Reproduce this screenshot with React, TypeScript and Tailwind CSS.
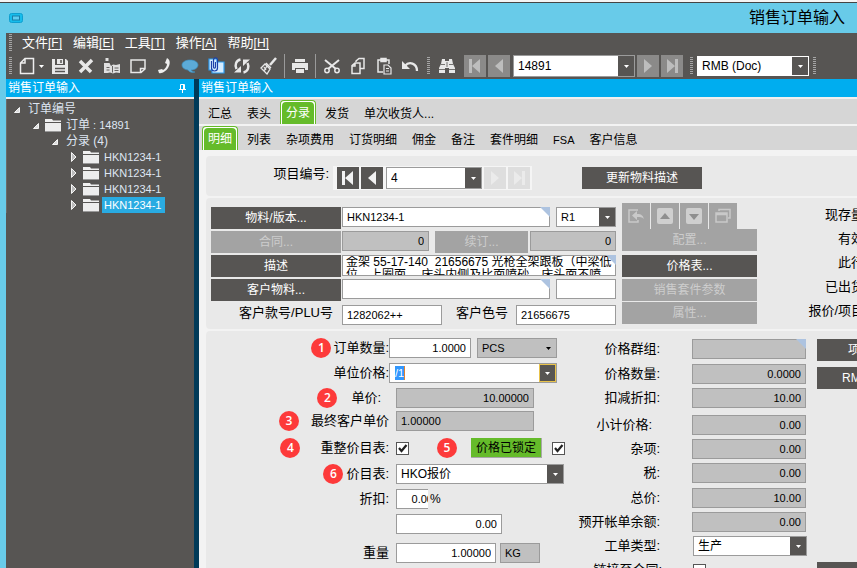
import React from "react";
import type { ReactNode } from "react";

const noop = () => {};

function Grip() {
  return (
    <svg className="h-[18px] w-[3px] shrink-0" viewBox="0 0 3 18" aria-hidden="true">
      {[0, 2, 4, 6, 8, 10, 12, 14, 16].map((y) => (
        <rect key={y} x="0" y={y} width="3" height="1" fill="#a5a5a5" />
      ))}
    </svg>
  );
}

function Menu({ text, hotkey }: { text: string; hotkey: string }) {
  return (
    <button type="button" className="flex items-center text-[13px] leading-5 text-white">
      {text}
      <span className="text-xs leading-4 underline underline-offset-2">[{hotkey}]</span>
    </button>
  );
}

function Tool({ label, children }: { label: string; children: ReactNode }) {
  return (
    <button type="button" aria-label={label} className="flex h-6 w-[26px] shrink-0 items-center justify-center">
      <svg className="size-[18px]" viewBox="0 0 18 18" fill="none" stroke="#e8e8e8" strokeWidth="1.5">
        {children}
      </svg>
    </button>
  );
}

type NavKind = "first" | "prev" | "next" | "last";

const navPaths: Record<NavKind, string> = {
  first: "M5 4h3v14H5zM16 4v14l-8-7z",
  prev: "M15 4v14l-8-7z",
  next: "M7 4v14l8-7z",
  last: "M14 4h3v14h-3zM6 4v14l8-7z",
};

function Nav({ kind, label, tone }: { kind: NavKind; label: string; tone: "dark" | "grey" | "pale" }) {
  const bg = { dark: "bg-[#575553]", grey: "bg-[#8b8a89]", pale: "bg-[#dedede]" }[tone];
  const fill = { dark: "#f2f2f2", grey: "#bdbdbd", pale: "#ebebeb" }[tone];
  return (
    <button type="button" aria-label={label} className={`size-[22px] shrink-0 ${bg}`}>
      <svg className="size-[22px]" viewBox="0 0 22 22" aria-hidden="true">
        <path d={navPaths[kind]} fill={fill} />
      </svg>
    </button>
  );
}

function Caret({ color }: { color: string }) {
  return (
    <svg className="h-[3px] w-[5px]" viewBox="0 0 5 3" aria-hidden="true">
      <path d="M0 0h5L2.500 3z" fill={color} />
    </svg>
  );
}

function Select({
  label,
  id,
  value,
  className,
  arrow = "bg-[#575553]",
  caret = "#fff",
  box = "border-[#9b9b9b] bg-white",
}: {
  label?: string;
  id?: string;
  value: string;
  className: string;
  arrow?: string;
  caret?: string;
  box?: string;
}) {
  return (
    <div className={`relative flex shrink-0 border ${box} ${className}`}>
      <select id={id} aria-label={label} className="h-full w-full appearance-none bg-transparent pl-1 text-black outline-none">
        <option>{value}</option>
      </select>
      <span className={`pointer-events-none absolute inset-y-0 right-0 flex w-4 items-center justify-center ${arrow}`}>
        <Caret color={caret} />
      </span>
    </div>
  );
}

function Corner() {
  return (
    <svg className="absolute top-0 right-0 size-[10px]" viewBox="0 0 10 10" aria-hidden="true">
      <path d="M0 0h10v10z" fill="#adc3e0" />
    </svg>
  );
}

function Field({
  id,
  label,
  value = "",
  className,
  right = false,
  grey = false,
  corner = false,
}: {
  id?: string;
  label?: string;
  value?: string;
  className: string;
  right?: boolean;
  grey?: boolean;
  corner?: boolean;
}) {
  return (
    <div className={`relative h-5 shrink-0 ${className}`}>
      <input
        id={id}
        aria-label={label}
        defaultValue={value}
        readOnly={grey}
        className={`block h-full w-full border border-[#9b9b9b] px-1 text-[11px] text-black outline-none ${right ? "text-right" : "text-left"} ${grey ? "bg-[#c0c0c0]" : "bg-white"}`}
      />
      {corner && <Corner />}
    </div>
  );
}

function Btn({ children, className, off = false }: { children: ReactNode; className: string; off?: boolean }) {
  return (
    <button
      type="button"
      disabled={off}
      className={`flex h-[22px] shrink-0 items-center justify-center text-xs whitespace-nowrap ${off ? "bg-[#a3a3a3] text-[#cdcdcd]" : "bg-[#575553] text-white"} ${className}`}
    >
      {children}
    </button>
  );
}

function Tab({ children, active = false }: { children: ReactNode; active?: boolean }) {
  return active ? (
    <button type="button" role="tab" aria-selected="true" className="h-6 rounded-t border border-b-0 border-[#65bb2a] bg-white px-px pt-px">
      <span className="flex h-[22px] items-center rounded-t-sm bg-[#65bb2a] px-1 text-white">{children}</span>
    </button>
  ) : (
    <button type="button" role="tab" aria-selected="false" className="h-6 px-1.5 pt-1">
      {children}
    </button>
  );
}

function Badge({ n }: { n: number }) {
  return (
    <span className="flex size-5 shrink-0 items-center justify-center rounded-full bg-[#fd3a3a] font-['Open_Sans',sans-serif] text-xs font-semibold text-white">
      {n}
    </span>
  );
}

function Check({ id, label, checked = false }: { id?: string; label?: string; checked?: boolean }) {
  return (
    <span className="relative size-[13px] shrink-0">
      <input
        id={id}
        type="checkbox"
        aria-label={label}
        defaultChecked={checked}
        className="peer block size-[13px] appearance-none border border-[#555] bg-white"
      />
      <svg className="pointer-events-none absolute inset-0 hidden size-[13px] peer-checked:block" viewBox="0 0 13 13" aria-hidden="true">
        <path d="M3 6l2.500 3L10.500 3" fill="none" stroke="#222" strokeWidth="2.200" />
      </svg>
    </span>
  );
}

/* A line of the order form: optional step number, right-aligned caption, controls. */
function FormRow({
  caption,
  htmlFor,
  step,
  gap = "gap-1",
  space,
  inset = "pr-0",
  children,
}: {
  caption?: string;
  htmlFor?: string;
  step?: number;
  gap?: string;
  space: string;
  inset?: string;
  children: ReactNode;
}) {
  return (
    <div className={`flex h-5 items-center ${space}`}>
      <div className={`flex w-[183px] shrink-0 items-center justify-end ${gap} ${inset}`}>
        {step !== undefined && <Badge n={step} />}
        {caption && (
          <label htmlFor={htmlFor} className="text-[13px] leading-5 whitespace-nowrap">
            {caption}
          </label>
        )}
      </div>
      {children}
    </div>
  );
}

function Folder() {
  return (
    <svg className="h-[13px] w-4 shrink-0" viewBox="0 0 16 13" aria-hidden="true">
      <path d="M0 0h7l1 1.500h8V3H0z" fill="#f0f0f0" />
      <path d="M0 4h16v8H0z" fill="#ededed" />
      <path d="M0 12h16v1H0z" fill="#999" />
    </svg>
  );
}

function TreeRow({
  indent,
  open = false,
  folder = false,
  selected = false,
  children,
}: {
  indent: string;
  open?: boolean;
  folder?: boolean;
  selected?: boolean;
  children: ReactNode;
}) {
  return (
    <li className={`flex h-4 items-center ${indent}`}>
      <svg className="h-3 w-3 shrink-0" viewBox="0 0 12 12" aria-hidden="true">
        {open ? (
          <path d="M5.500 4.500v5h-5z" fill="#ddd" stroke="#f4f4f4" />
        ) : (
          <path d="M.5 1.500v9l4.500-4.500z" fill="#bbb" stroke="#f4f4f4" />
        )}
      </svg>
      {folder && <span className="mr-[3px] flex"><Folder /></span>}
      <span className={`flex h-4 items-center px-0.5 whitespace-pre ${selected ? "bg-[#29abe2] pr-1 text-white" : ""}`}>{children}</span>
    </li>
  );
}

const totals = [
  { id: "priceGroup", caption: "价格群组:", value: "", space: "mt-0", corner: true },
  { id: "priceQty", caption: "价格数量:", value: "0.0000", space: "mt-[5px]" },
  { id: "lessDiscount", caption: "扣减折扣:", value: "10.00", space: "mt-1" },
  { id: "subtotal", caption: "小计价格:", value: "0.00", space: "mt-[7px]", inset: true },
  { id: "misc", caption: "杂项:", value: "0.00", space: "mt-1" },
  { id: "tax", caption: "税:", value: "0.00", space: "mt-1" },
  { id: "total", caption: "总价:", value: "10.00", space: "mt-[5px]" },
  { id: "advance", caption: "预开帐单余额:", value: "0.00", space: "mt-1" },
];

function Toolbar() {
  return (
    <div className="flex h-[26px] items-center pl-[3px]">
      <Grip />
      <button type="button" aria-label="新建" className="ml-1.5 flex h-6 shrink-0 items-center">
        <svg className="size-[18px]" viewBox="0 0 18 18" fill="none" stroke="#eee" strokeWidth="1.500">
          <path d="M7 1.500h8.500v15h-13V6zM7 1.500V6H2.500" />
        </svg>
        <span className="flex w-[11px] justify-center"><Caret color="#fff" /></span>
      </button>
      <Tool label="保存">
        <path d="M1 2h3v6h10V2h1l2 2v13H1zM6 2h6v5H6z" fill="#e8e8e8" stroke="none" />
        <path d="M10 3v3M4 11.500h10M4 14.500h10" stroke="#575553" />
      </Tool>
      <Tool label="删除">
        <path d="M3 4l11 11M15 3L3 15" strokeWidth="3.500" />
      </Tool>
      <Tool label="目录">
        <path d="M2.500 1h3v3h-3zM1 6h5.500l1.500 3 2-1.500 3 .5 4-1v9l-4-.5-3 1-3-1-2.500.5H1z" fill="#e0e0e0" stroke="none" />
        <path d="M9.500 9v6.500M3.500 10.500h3M3.500 13h3M11.500 11h4M11.500 13.500h4" stroke="#575553" strokeWidth=".9" />
      </Tool>
      <Tool label="备忘">
        <path d="M2 3h14v9l-4 3.500H2zM16 11.500h-4.500v4" />
      </Tool>
      <Tool label="电话">
        <path d="M12 1c4 2 3 7 1 10s-6 6-9 5l-1-3 4-1 1 1c2-1 4-4 4-6l-2-1z" fill="#eee" stroke="none" />
      </Tool>
      <Tool label="消息">
        <path d="M1 8c0-3 3.500-5 8-5s8 2 8 5-3.500 5-7 5c1 1 2 2 4 2-3 1-6 0-7-2-4-.5-6-2.500-6-5z" fill="#5cabd8" stroke="#3c8fc0" strokeWidth=".7" />
      </Tool>
      <Tool label="附件">
        <path d="M2 2h8v3h7v11H5v-3H2z" fill="#d5ecff" stroke="#2b9bf0" strokeWidth="1.200" />
        <path d="M4.500 4v7c0 4 6 4 6 0V3c0-3-4-3-4 0v7c0 1.500 2 1.500 2 0V5" stroke="#1b3fa8" strokeWidth="1.200" />
      </Tool>
      <Tool label="刷新">
        <path d="M7.500 2.500C3 3.500 1.500 8 3.500 12M10.500 15.500c4.500-1 6-5.500 4-9.500" strokeWidth="2.500" />
        <path d="M1 15.500h7v-6.500zM17 2.500h-7V9z" fill="#e8e8e8" stroke="none" />
      </Tool>
      <Tool label="清除">
        <path d="M17 1l-6 7" strokeWidth="2.500" />
        <path d="M7 6l5 5M6 7l5 5-3 5-6-6zM5 10l2 3M8 9l-3 5" strokeWidth="1.300" />
      </Tool>
      <span className="mr-0.5 ml-[3px] h-6 w-px shrink-0 bg-[#9a9a9a]" />
      <Tool label="打印">
        <path d="M4 2h10v3H4zM1 6h16v7h-3v-2H4v2H1zM5 12h8v4H5z" fill="#e8e8e8" stroke="none" />
      </Tool>
      <span className="mr-[3px] ml-0.5 h-6 w-px shrink-0 bg-[#9a9a9a]" />
      <Tool label="剪切">
        <path d="M2 3l11 9M16 3L5 12" strokeWidth="2" />
        <circle cx="4" cy="13.500" r="2.200" />
        <circle cx="14" cy="13.500" r="2.200" />
      </Tool>
      <Tool label="复制">
        <path d="M7 5V4l3-2.500h5v10h-4M3 8.500L6 6h5v10.500H3zM6 6v3H3" />
      </Tool>
      <Tool label="粘贴">
        <path d="M8 15H3V3h11v4M6 1.500h5v3H6z" />
        <path d="M9 8h4l3 3v6H9zM11 11.500h3M11 14h3" strokeWidth="1.200" />
      </Tool>
      <Tool label="撤销">
        <path d="M4 9c4-5 12-3 12 5" strokeWidth="2.300" />
        <path d="M1 4v8h8z" fill="#e8e8e8" stroke="none" />
      </Tool>
      <span className="mx-1 flex"><Grip /></span>
      <Tool label="查找">
        <path d="M4 2h3v2h4V2h3l1 5 2 4v5h-6v-5H7v5H1v-5l2-4zM7 6h4v4H7z" fill="#e8e8e8" stroke="none" />
        <path d="M3 7.500h4M11 7.500h4M9 5v5M1 12.500h6M11 12.500h6" stroke="#575553" strokeWidth=".8" />
      </Tool>
      <div className="ml-1 flex items-center gap-0.5">
        <Nav kind="first" label="第一张" tone="grey" />
        <Nav kind="prev" label="上一张" tone="grey" />
        <Select label="订单" value="14891" className="ml-px h-[22px] w-[122px] text-xs" />
        <Nav kind="next" label="下一张" tone="grey" />
        <Nav kind="last" label="最后一张" tone="grey" />
      </div>
      <span className="mr-1 ml-[7px] flex"><Grip /></span>
      <Select label="货币" value="RMB (Doc)" className="h-5 w-28 text-xs" box="border-white bg-white" arrow="bg-[#575553]" />
      <span className="ml-1 flex"><Grip /></span>
    </div>
  );
}

function ItemBar() {
  return (
    <section className="flex h-10 shrink-0 items-center rounded-l bg-[#e9e9e9] pt-1">
      <label htmlFor="item" className="mb-2 w-[123px] shrink-0 text-right text-[13px]">项目编号:</label>
      <div className="ml-1 flex items-center gap-0.5 bg-[#f5f5f5] py-px pr-0.5 pl-1">
        <Nav kind="first" label="第一项" tone="dark" />
        <Nav kind="prev" label="上一项" tone="dark" />
        <Select id="item" value="4" className="ml-px h-[22px] w-24 text-xs" />
        <Nav kind="next" label="下一项" tone="pale" />
        <Nav kind="last" label="最后一项" tone="pale" />
      </div>
      <Btn className="ml-[50px] h-6 w-[120px]">更新物料描述</Btn>
    </section>
  );
}

function IconBtn({ label, children }: { label: string; children: ReactNode }) {
  return (
    <button type="button" aria-label={label} className="flex h-[26px] w-7 items-center justify-center bg-[#a3a3a3]">
      <svg className="size-4" viewBox="0 0 16 16" fill="none" stroke="#c9c9c9" strokeWidth="1.500">{children}</svg>
    </button>
  );
}

function PartPanel() {
  return (
    <section className="flex h-[131px] shrink-0 rounded-l bg-[#e9e9e9] pl-[5px]">
      <div className="flex w-[405px] shrink-0 flex-col gap-0.5 pt-[9px]">
        <div className="flex h-[22px] items-start">
          <Btn className="mr-px w-[130px]">物料/版本...</Btn>
          <Field label="物料" value="HKN1234-1" className="w-52" corner />
          <Select label="版本" value="R1" className="ml-1.5 h-5 w-[60px] text-[11px]" />
        </div>
        <div className="flex h-[22px] items-start">
          <Btn off className="mr-px w-[130px]">合同...</Btn>
          <Field label="合同" value="0" className="w-[87px]" right grey />
          <Btn off className="mr-0.5 ml-1.5 w-[93px]">续订...</Btn>
          <Field label="续订" value="0" className="w-[86px]" right grey />
        </div>
        <div className="flex h-[22px] items-start">
          <Btn className="mr-px w-[130px]">描述</Btn>
          <div className="relative h-[21px] flex-1">
            <textarea
              aria-label="描述"
              wrap="off"
              className="block h-full w-full resize-none overflow-hidden border border-[#9b9b9b] bg-white px-[3px] text-xs leading-[13px] text-black outline-none"
              defaultValue={"金架 55-17-140  21656675 光枪全架跟板（中梁低\n位。上圈面。 床头内侧及比面喷砂，床头面不喷"}
            />
            <Corner />
          </div>
        </div>
        <div className="flex h-[22px] items-start">
          <Btn className="mr-px w-[130px]">客户物料...</Btn>
          <Field label="客户物料" className="w-52" corner />
          <Field label="客户版本" className="ml-1.5 w-[60px]" />
        </div>
        <div className="flex h-[22px] items-end">
          <label htmlFor="plu" className="mr-[9px] mb-0.5 w-[122px] text-right text-[13px] leading-5">客户款号/PLU号</label>
          <Field id="plu" value="1282062++" className="w-[100px]" />
          <label htmlFor="color" className="mb-0.5 w-[74px] pr-2 text-right text-[13px] leading-5">客户色号</label>
          <Field id="color" value="21656675" className="w-[100px]" />
        </div>
      </div>
      <div className="ml-1.5 w-[135px] shrink-0 pt-[5px]">
        <div className="flex gap-px">
          <IconBtn label="返回">
            <path d="M10 2H1v12h9v-2" />
            <path d="M9 3v3c5 0 6 2 7 5-2-2-4-2-7-2v3L4 7.500z" fill="#c9c9c9" stroke="none" />
          </IconBtn>
          <IconBtn label="上移">
            <rect x="0" y="0" width="16" height="16" rx="2" fill="#cfcfcf" stroke="none" />
            <path d="M3 11h10L8 5z" fill="#8f8f8f" stroke="none" />
          </IconBtn>
          <IconBtn label="下移">
            <rect x="0" y="0" width="16" height="16" rx="2" fill="#cfcfcf" stroke="none" />
            <path d="M3 6h10l-5 6z" fill="#8f8f8f" stroke="none" />
          </IconBtn>
          <IconBtn label="窗口">
            <path d="M4 3V1.500h11V10h-2M1 5h11v9H1zM1 6.500h11" />
          </IconBtn>
        </div>
        <Btn off className="w-full">配置...</Btn>
        <Btn className="mt-1 w-full">价格表...</Btn>
        <Btn off className="mt-0.5 w-full">销售套件参数</Btn>
        <Btn off className="mt-px w-full">属性...</Btn>
      </div>
      <ul className="ml-[42px] flex w-[65px] shrink-0 flex-col items-end pt-[5px] text-[13px] leading-6 whitespace-nowrap">
        <li>现存量</li>
        <li>有效</li>
        <li>此行</li>
        <li>已出货</li>
        <li>报价/项目</li>
      </ul>
    </section>
  );
}

function OrderForm() {
  return (
    <section className="flex min-h-0 flex-1 rounded-tl bg-[#e9e9e9] pt-[7px]">
      <div className="w-[364px] shrink-0">
        <FormRow caption="订单数量:" htmlFor="qty" step={1} gap="gap-0.5" space="mt-0">
          <Field id="qty" value="1.0000" className="w-[82px]" right />
          <Select label="单位" value="PCS" className="ml-1.5 h-5 w-20 text-[11px]" box="border-[#9b9b9b] bg-[#c0c0c0]" arrow="bg-[#c0c0c0]" caret="#000" />
        </FormRow>
        <FormRow caption="单位价格:" htmlFor="unitPrice" space="mt-[5px]">
          <div className="flex h-5 w-[168px] border border-[#9b9b9b] bg-white">
            <div className="flex flex-1 items-center pl-[5px]">
              <input
                id="unitPrice"
                defaultValue="/1"
                className="h-3.5 w-2.5 border-r border-[#e08030] bg-[#3297fd] text-[11px] text-white outline-none"
              />
            </div>
            <button type="button" aria-label="选择单位价格" className="flex w-[17px] items-center justify-center border border-[#e8c24a] bg-[#575553]">
              <Caret color="#fff" />
            </button>
          </div>
        </FormRow>
        <FormRow caption="单价:" htmlFor="price" step={2} gap="gap-3.5" inset="pr-2" space="mt-[5px]">
          <Field id="price" value="10.00000" className="ml-[7px] w-[138px]" right grey />
        </FormRow>
        <FormRow caption="最终客户单价" htmlFor="finalPrice" step={3} gap="gap-3" space="mt-[3px]">
          <Field id="finalPrice" value="1.00000" className="ml-[7px] w-[138px]" grey />
        </FormRow>
        <FormRow caption="重整价目表:" htmlFor="reprice" step={4} gap="gap-5" space="mt-[7px]">
          <span className="ml-[7px] flex"><Check id="reprice" checked /></span>
          <span className="ml-7 flex"><Badge n={5} /></span>
          <button type="button" className="ml-3.5 h-5 w-[71px] border-r border-b border-[#a8a8a8] bg-[#65bb2a] text-xs text-black">
            价格已锁定
          </button>
          <span className="ml-2.5 flex"><Check label="价格已锁定" checked /></span>
        </FormRow>
        <FormRow caption="价目表:" htmlFor="priceList" step={6} gap="gap-[3px]" space="mt-1.5">
          <Select id="priceList" value="HKO报价" className="ml-[7px] h-5 w-[168px] text-xs" />
        </FormRow>
        <FormRow caption="折扣:" htmlFor="discount" space="mt-[5px]">
          <div className="ml-[7px] flex h-5 w-8 overflow-hidden">
            <Field id="discount" value="0.00" className="w-[42px]" right />
          </div>
          <span className="ml-0.5 text-xs">%</span>
        </FormRow>
        <FormRow space="mt-[5px]">
          <Field label="折扣金额" value="0.00" className="ml-[7px] w-[106px]" right />
        </FormRow>
        <FormRow caption="重量" htmlFor="weight" space="mt-[9px]">
          <Field id="weight" value="1.00000" className="ml-[7px] w-[100px]" right />
          <Field label="重量单位" value="KG" className="ml-1 w-10" grey />
        </FormRow>
      </div>
      <div className="w-[237px] shrink-0 pt-px">
        {totals.map((t) => (
          <div key={t.id} className={`flex h-5 items-center ${t.space}`}>
            <label htmlFor={t.id} className={`w-[90px] shrink-0 text-right text-[13px] leading-5 whitespace-nowrap ${t.inset ? "pr-2" : ""}`}>
              {t.caption}
            </label>
            <Field id={t.id} value={t.value} className="ml-8 w-[114px]" right grey corner={t.corner} />
          </div>
        ))}
        <div className="mt-1 flex h-5 items-center">
          <label htmlFor="jobType" className="w-[90px] text-right text-[13px] leading-5">工单类型:</label>
          <Select id="jobType" value="生产" className="ml-[33px] h-5 w-[114px] text-xs" />
        </div>
        <div className="mt-1 flex h-5 items-center">
          <label htmlFor="linked" className="w-[92px] text-right text-[13px] leading-5">链接至合同:</label>
          <span className="ml-[31px] flex"><Check id="linked" /></span>
        </div>
      </div>
      <div className="ml-2.5 w-[100px] shrink-0 pt-px">
        <button type="button" className="block h-[22px] w-full bg-[#575553] pl-[31px] text-left text-xs text-white">项</button>
        <button type="button" className="mt-1.5 block h-[22px] w-full bg-[#575553] pl-[25px] text-left text-xs text-white">RMB</button>
        <div className="mt-[173px] h-[22px] bg-[#575553]" />
      </div>
    </section>
  );
}

export default function App() {
  return (
    <div className="flex h-screen flex-col overflow-hidden border-t-2 border-[#f4f4f4] bg-[#68cbe9] font-['Liberation_Sans','Noto_Sans_CJK_SC',sans-serif] text-xs text-black">
      <header className="flex h-[31px] shrink-0 items-center justify-between border-t border-[#444] pr-3 pl-[9px]">
        <svg className="h-2.5 w-3.5" viewBox="0 0 14 10" aria-hidden="true">
          <rect x=".5" y=".5" width="13" height="9" rx="2" fill="#16bdec" stroke="#0e9fd0" />
          <rect x="3.500" y="3" width="7" height="4" fill="#5fcdf0" stroke="#1b7fa8" />
        </svg>
        <h1 className="text-base leading-6">销售订单输入</h1>
      </header>
      <div className="flex min-h-0 flex-1 flex-col pl-1.5">
        <div className="shrink-0 bg-[#575553]">
          <nav className="flex h-5 items-center pl-[3px]">
            <Grip />
            <div className="ml-2.5 flex gap-[11px]">
              <Menu text="文件" hotkey="F" />
              <Menu text="编辑" hotkey="E" />
              <Menu text="工具" hotkey="T" />
              <Menu text="操作" hotkey="A" />
              <Menu text="帮助" hotkey="H" />
            </div>
          </nav>
          <Toolbar />
        </div>
        <div className="flex min-h-0 flex-1 bg-[#003a58]">
          <aside className="mr-[5px] flex w-[188px] shrink-0 flex-col bg-[#575553]">
            <div className="flex h-5 items-center justify-between border-b-2 border-[#f0f0f0] bg-[#00adef] pr-2 pl-0.5 text-white">
              <h2 className="leading-4">销售订单输入</h2>
              <button type="button" aria-label="固定">
                <svg className="h-[9px] w-[7px]" viewBox="0 0 7 9" fill="none" stroke="#fff" aria-hidden="true">
                  <path d="M1.500 5V.5h4V5M4.500 1v4M0 5.500h7M3.500 6v3" />
                </svg>
              </button>
            </div>
            <ul className="border-l border-[#6b6a68] pt-[2px] text-[11px] text-[#dfe6f2]">
              <TreeRow indent="pl-[7px]" open><span className="text-xs">订单编号</span></TreeRow>
              <TreeRow indent="pl-[26px]" open folder><span className="text-xs">订单</span> : 14891</TreeRow>
              <TreeRow indent="pl-[45px]" open><span className="text-xs">分录 (4)</span></TreeRow>
              <TreeRow indent="pl-[64px]" folder>HKN1234-1</TreeRow>
              <TreeRow indent="pl-[64px]" folder>HKN1234-1</TreeRow>
              <TreeRow indent="pl-[64px]" folder>HKN1234-1</TreeRow>
              <TreeRow indent="pl-[64px]" folder selected>HKN1234-1</TreeRow>
            </ul>
          </aside>
          <main className="flex min-w-0 flex-1 flex-col overflow-hidden bg-[#f3f3f3]">
            <h2 className="flex h-5 shrink-0 items-center border-b-2 border-[#f0f0f0] bg-[#00adef] pl-0.5 leading-4 text-white">销售订单输入</h2>
            <div role="tablist" className="flex h-[25px] shrink-0 items-end gap-[3px] bg-[#d6d6d6] pl-[3px]">
              <Tab>汇总</Tab>
              <Tab>表头</Tab>
              <Tab active>分录</Tab>
              <Tab>发货</Tab>
              <Tab>单次收货人...</Tab>
            </div>
            <div role="tablist" className="mt-0.5 flex h-6 shrink-0 items-end gap-[3px] bg-[#d6d6d6] pl-[3px]">
              <Tab active>明细</Tab>
              <Tab>列表</Tab>
              <Tab>杂项费用</Tab>
              <Tab>订货明细</Tab>
              <Tab>佣金</Tab>
              <Tab>备注</Tab>
              <Tab>套件明细</Tab>
              <Tab><span className="text-[11px]">FSA</span></Tab>
              <Tab>客户信息</Tab>
            </div>
            <form className="mt-1.5 flex min-h-0 flex-1 flex-col gap-0.5 pl-[7px]" onSubmit={noop}>
              <ItemBar />
              <PartPanel />
              <OrderForm />
            </form>
          </main>
        </div>
      </div>
    </div>
  );
}
